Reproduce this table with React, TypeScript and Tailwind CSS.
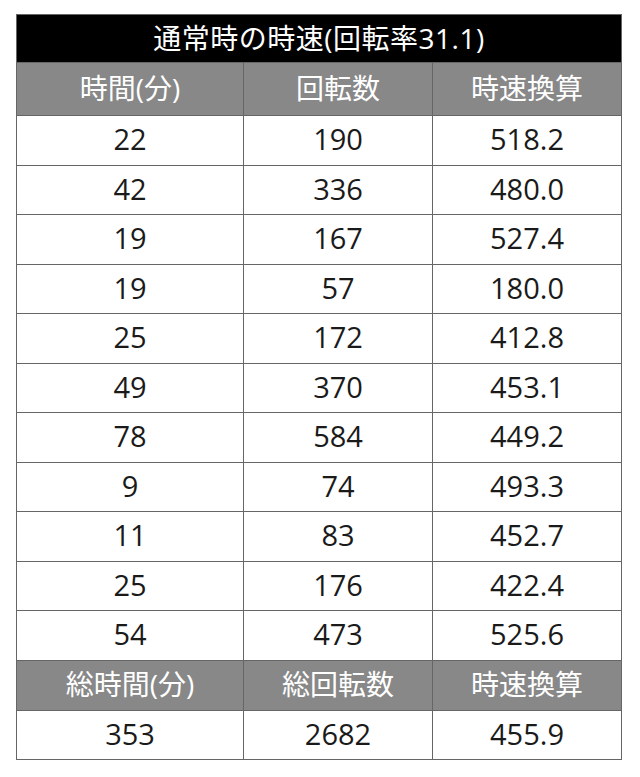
const rows: [string, string, string][] = [
  ["22", "190", "518.2"],
  ["42", "336", "480.0"],
  ["19", "167", "527.4"],
  ["19", "57", "180.0"],
  ["25", "172", "412.8"],
  ["49", "370", "453.1"],
  ["78", "584", "449.2"],
  ["9", "74", "493.3"],
  ["11", "83", "452.7"],
  ["25", "176", "422.4"],
  ["54", "473", "525.6"],
];

const font = { fontFamily: '"Open Sans", "Noto Sans CJK JP", sans-serif' };

function HeadRow({ cells, h }: { cells: string[]; h: string }) {
  return (
    <tr className={h + " bg-[#888888] text-white"}>
      {cells.map((c, i) => (
        <td key={i} className="border border-[#666666] p-0 pb-[2px] text-center">
          {c}
        </td>
      ))}
    </tr>
  );
}

export default function App() {
  return (
    <div className="min-h-[777px] bg-white pl-4 pt-[14px]" style={font}>
      <table className="w-[605px] table-fixed border-collapse border border-[#666666] text-[28px] leading-none">
        <colgroup>
          <col className="w-[227px]" />
          <col className="w-[189px]" />
          <col className="w-[189px]" />
        </colgroup>
        <tbody>
          <tr className="h-[48px] bg-black text-white">
            <td colSpan={3} className="border border-[#666666] p-0 pb-[2px] text-center tracking-[0.5px]">
              通常時の時速(回転率31.1)
            </td>
          </tr>
          <HeadRow h="h-[53px]" cells={["時間(分)", "回転数", "時速換算"]} />
          {rows.map((r, i) => (
            <tr key={i} className="h-[49.5px] text-[#1a1a1a]">
              {r.map((c, j) => (
                <td key={j} className="border border-[#666666] p-0 pb-[3px] text-center text-[29px]">
                  {c}
                </td>
              ))}
            </tr>
          ))}
          <HeadRow h="h-[50px]" cells={["総時間(分)", "総回転数", "時速換算"]} />
          <tr className="h-[49px] text-[#1a1a1a]">
            {["353", "2682", "455.9"].map((c, j) => (
              <td key={j} className="border border-[#666666] p-0 pb-[3px] text-center text-[29px]">
                {c}
              </td>
            ))}
          </tr>
        </tbody>
      </table>
    </div>
  );
}
